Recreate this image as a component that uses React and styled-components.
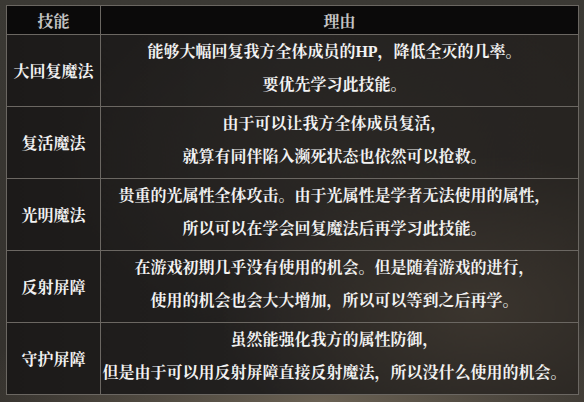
import React from "react";
import styled, { createGlobalStyle } from "styled-components";

const Global = createGlobalStyle`
  html, body { margin: 0; padding: 0; }
  body {
    width: 584px;
    height: 402px;
    overflow: hidden;
    background:
      radial-gradient(ellipse 60% 30% at 55% 100%, #6a6153 0%, rgba(106,97,83,0) 100%),
      linear-gradient(180deg, #3b3934 0%, #34312d 100%);
    font-family: "Liberation Serif", "Noto Serif CJK SC", "Noto Sans CJK SC", serif;
  }
`;

const Frame = styled.div`
  padding: 5px 5px 0 6px;
`;

const Table = styled.table`
  width: 573px;
  border-collapse: collapse;
  table-layout: fixed;
  border: 1px solid #6b6762;
  background:
    radial-gradient(ellipse 45% 40% at 82% 78%, #3b352e 0%, rgba(59,53,46,0) 100%),
    radial-gradient(ellipse 50% 50% at 60% 40%, #2a2724 0%, rgba(42,39,36,0) 100%),
    linear-gradient(90deg, #1c1a19 0%, #232120 50%, #262320 100%);
`;

const HeadCell = styled.th`
  height: 28px;
  padding: 0;
  background: #0b0a0a;
  border: 1px solid #6b6762;
  color: #c4c4c4;
  font-size: 16px;
  font-weight: bold;
  text-align: center;
  vertical-align: middle;
  width: ${(p) => (p.$narrow ? "93px" : "auto")};
`;

const Row = styled.tr`
  height: 72px;
`;

const SkillCell = styled.td`
  padding: 0;
  border: 1px solid #6b6762;
  color: #f2f2f2;
  font-size: 16px;
  font-weight: bold;
  text-align: center;
  vertical-align: middle;
  height: 71px;
`;

const ReasonCell = styled.td`
  padding: 0 10px 5px 0;
  border: 1px solid #6b6762;
  color: #f2f2f2;
  font-size: 16px;
  font-weight: bold;
  text-align: center;
  vertical-align: middle;
`;

const Line = styled.div`
  line-height: 33px;
  white-space: nowrap;
`;

const rows = [
  ["大回复魔法", ["能够大幅回复我方全体成员的HP，降低全灭的几率。", "要优先学习此技能。"]],
  ["复活魔法", ["由于可以让我方全体成员复活，", "就算有同伴陷入濒死状态也依然可以抢救。"]],
  ["光明魔法", ["贵重的光属性全体攻击。由于光属性是学者无法使用的属性，", "所以可以在学会回复魔法后再学习此技能。"]],
  ["反射屏障", ["在游戏初期几乎没有使用的机会。但是随着游戏的进行，", "使用的机会也会大大增加，所以可以等到之后再学。"]],
  ["守护屏障", ["虽然能强化我方的属性防御，", "但是由于可以用反射屏障直接反射魔法，所以没什么使用的机会。"]],
];

export default function App() {
  return (
    <>
      <Global />
      <Frame>
        <Table>
          <thead>
            <tr>
              <HeadCell $narrow>技能</HeadCell>
              <HeadCell>理由</HeadCell>
            </tr>
          </thead>
          <tbody>
            {rows.map(([skill, lines]) => (
              <Row key={skill}>
                <SkillCell>{skill}</SkillCell>
                <ReasonCell>
                  {lines.map((l) => (
                    <Line key={l}>{l}</Line>
                  ))}
                </ReasonCell>
              </Row>
            ))}
          </tbody>
        </Table>
      </Frame>
    </>
  );
}
